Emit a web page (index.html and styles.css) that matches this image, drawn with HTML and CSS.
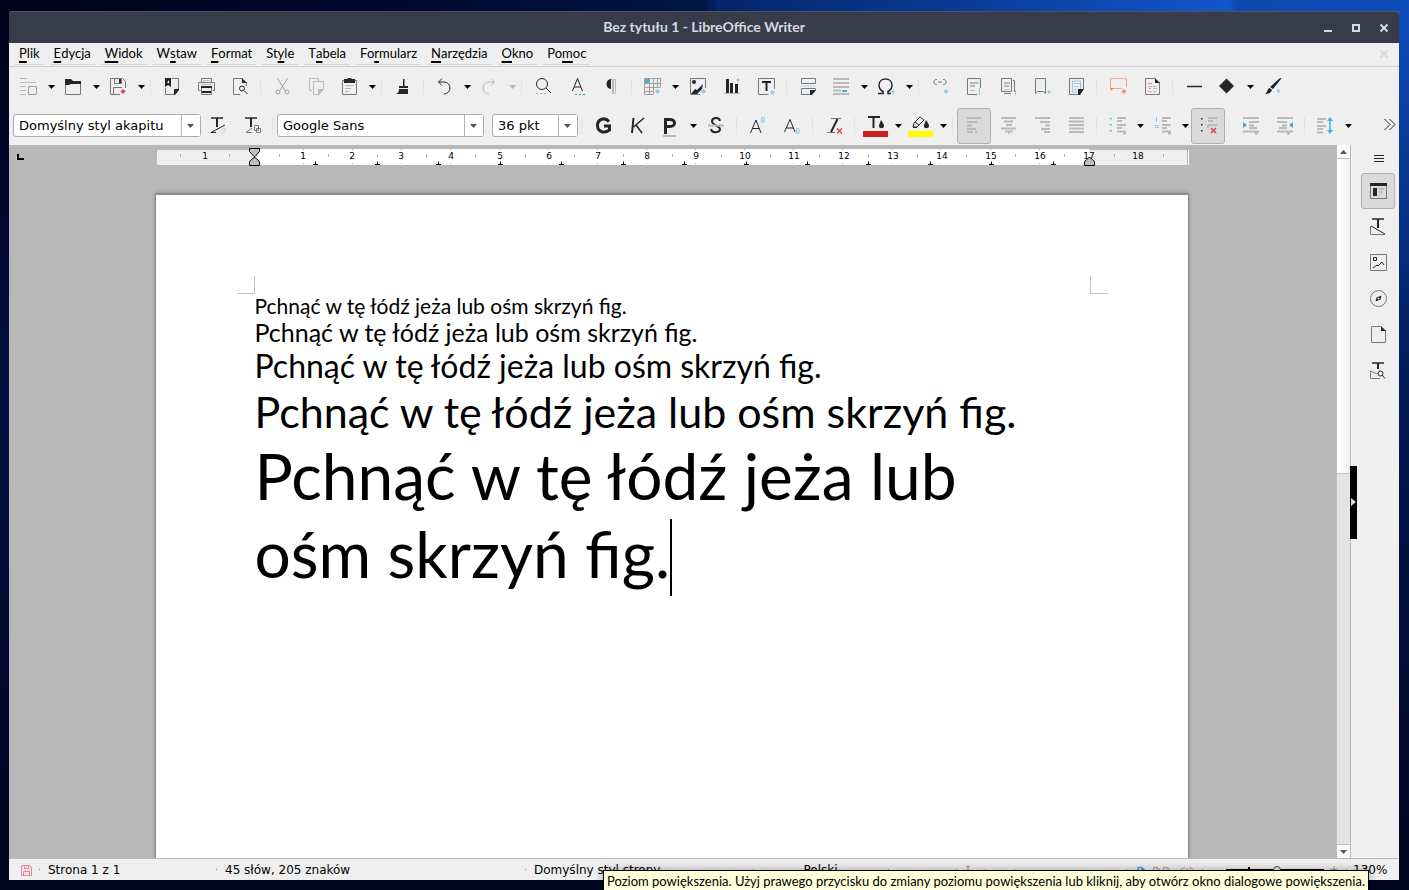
FILE: index.html
```html
<!DOCTYPE html>
<html lang="pl">
<head>
<meta charset="utf-8">
<title>Bez tytułu 1 - LibreOffice Writer</title>
<link rel="stylesheet" href="styles.css">
</head>
<body>
<svg class="defs" aria-hidden="true">
  <symbol id="dd" viewBox="0 0 7 4"><path d="M0 0h7L3.5 4z"/></symbol>
</svg>
<main class="window">
  <header class="titlebar">
    <h1>Bez tytułu 1 - LibreOffice Writer</h1>
    <div class="winbtns">
      <button aria-label="Minimalizuj"><svg viewBox="0 0 10 10"><path class="tb" d="M1 8h8"/></svg></button>
      <button aria-label="Maksymalizuj"><svg viewBox="0 0 10 10"><path class="tb" d="M2 2h6v6H2z"/></svg></button>
      <button aria-label="Zamknij"><svg viewBox="0 0 10 10"><path class="tb" d="M1.5 1.5l7 7m0-7l-7 7"/></svg></button>
    </div>
  </header>

  <nav class="menubar" aria-label="Menu">
    <button><u>P</u>lik</button>
    <button><u>E</u>dycja</button>
    <button><u>W</u>idok</button>
    <button>W<u>s</u>taw</button>
    <button><u>F</u>ormat</button>
    <button>St<u>y</u>le</button>
    <button>T<u>a</u>bela</button>
    <button>Fo<u>r</u>mularz</button>
    <button><u>N</u>arzędzia</button>
    <button><u>O</u>kno</button>
    <button>Po<u>m</u>oc</button>
    <button class="closedoc" aria-label="Zamknij dokument"><svg viewBox="0 0 10 10"><path d="M1.5 1.5l7 7m0-7l-7 7"/></svg></button>
  </nav>

  <div class="toolbar" role="toolbar" aria-label="Standardowy">
    <button class="split" aria-label="Szablony"><svg class="ic" viewBox="0 0 17 17"><path class="g" d="M0 .5h7M0 4.5h16M0 8.5h6M0 12.5h6M0 16.5h6"/><path class="gd" d="M8.5 8.5h8v8h-8z"/></svg><svg class="dd"><use href="#dd"/></svg></button>
    <button class="split" aria-label="Otwórz"><svg class="ic" viewBox="0 0 17 17"><path class="d" d="M.5 4v12.5h15V4"/><path class="f" d="M0 1h6l2 2h8v3H6L4 7H0z"/></svg><svg class="dd"><use href="#dd"/></svg></button>
    <button class="split" aria-label="Zapisz"><svg class="ic" viewBox="0 0 17 17"><path class="d" d="M10 16.5H.5V.5h12l3 3V10M4.5.5v5h7v-5M3.5 16V9.5H12"/><path class="f" d="M9 1h2v4H9z"/><path class="red" d="M13 11l2.5 2.500-2.500 2.500-2.500-2.500z"/></svg><svg class="dd"><use href="#dd"/></svg></button>
    <i class="sep"></i>
    <button aria-label="Eksportuj do PDF"><svg class="ic" viewBox="0 0 17 17"><path class="d" d="M8 .5h6.500V11M1.500 10v6.500H10"/><path class="f" d="M1 0h6v9l-3-2-3 2zM15 11v1l-4 5h-1v-6z"/><path class="w" d="M3 5l2-3v3z"/></svg></button>
    <button aria-label="Drukuj"><svg class="ic" viewBox="0 0 17 17"><path class="d" d="M3.500 4V.5h10V4M2.500 12.500H.5v-8h16v8h-2M3.500 10v6.500h10V10"/><path class="g" d="M3 6.500h11M5 2.500h7"/><path class="k2" d="M3 9h11M4 14h9"/></svg></button>
    <button aria-label="Podgląd wydruku"><svg class="ic" viewBox="0 0 17 17"><path class="d" d="M8 16.500H1.500V.5H11M14.500 4v4"/><path class="f" d="M10 0l5 5h-5z"/><circle class="k" cx="10" cy="10.500" r="2.500"/><path class="k" d="M12 12.500l3.500 3.500"/></svg></button>
    <i class="sep"></i>
    <button aria-label="Wytnij"><svg class="ic" viewBox="0 0 17 17"><path class="gd" d="M3.500.5L11 12.500M13.500.5L6 12.500"/><circle class="gd" cx="4" cy="14" r="2"/><circle class="gd" cx="13" cy="14" r="2"/></svg></button>
    <button aria-label="Kopiuj"><svg class="ic" viewBox="0 0 17 17"><path class="g" d="M4 12.500H1.500V.5h9V3M5.500 3.500h10v8l-5 5h-5z"/><path class="gf" d="M10 11h6l-5 6h-1z"/></svg></button>
    <button class="split" aria-label="Wklej"><svg class="ic" viewBox="0 0 17 17"><path class="d" d="M1.500 2.500h14v14h-14z"/><path class="f" d="M3 1h3l1-1h3l1 1h3v4H3z"/><path class="g" d="M4 7.500h9M4 10.500h6M4 13.500h4"/></svg><svg class="dd"><use href="#dd"/></svg></button>
    <i class="sep"></i>
    <button aria-label="Klonuj formatowanie"><svg class="ic" viewBox="0 0 17 17"><path class="f" d="M8 1h1.500v7H8zM4 8h9v2H4zM4 11h9v5H1c2-1 3-2 3-5z"/></svg></button>
    <i class="sep"></i>
    <button class="split" aria-label="Cofnij"><svg class="ic" viewBox="0 0 17 17"><path class="k" d="M6 .5L2.500 4 6 7.500M2.500 4H8a6 6 0 0 1 0 12"/></svg><svg class="dd"><use href="#dd"/></svg></button>
    <button class="split off" aria-label="Ponów"><svg class="ic" viewBox="0 0 17 17"><path class="g" d="M10 .5L13.500 4 10 7.500M13.500 4H8a6 6 0 0 0 0 12"/></svg><svg class="dd"><use href="#dd"/></svg></button>
    <i class="sep"></i>
    <button aria-label="Znajdź i zamień"><svg class="ic" viewBox="0 0 17 17"><circle class="k" cx="7" cy="6" r="5.500"/><path class="k" d="M11 10l5 5"/><path class="rs" d="M1 15.500h2m2 0h2m2 0h2"/></svg></button>
    <button aria-label="Pisownia"><svg class="ic" viewBox="0 0 17 17"><path class="k" d="M3.500 13L8.500.5l5 12.500M5 9h7"/><path class="gs" d="M6 16.500h2m2 0h2m2 0h2"/></svg></button>
    <button aria-label="Znaki formatowania"><svg class="ic" viewBox="0 0 17 17"><path class="f" d="M8 1v10C2 11 2 1 8 1z"/><path class="g2" d="M10 1v15"/><path class="g" d="M12.500 1v15M8 1.500h5"/></svg></button>
    <i class="sep"></i>
    <button class="split" aria-label="Wstaw tabelę"><svg class="ic" viewBox="0 0 17 17"><path class="gd" d="M.5.5h16v9M.5.5v16h9M5.500 1v15M9.500 1v15M13.500 1v9M1 5.500h15M1 9.500h15M1 13.500h9"/><path class="bf" d="M1 1h4v4H1z"/><path class="lb" d="M13.500 11l2.500 2.500-2.500 2.500-2.500-2.500z"/></svg><svg class="dd"><use href="#dd"/></svg></button>
    <button aria-label="Wstaw obraz"><svg class="ic" viewBox="0 0 17 17"><path class="d" d="M.5 16V.5h15V10M.5 16.500H10"/><circle class="f" cx="4" cy="4" r="2"/><path class="f" d="M1 16l4-5 2 1 6-6-1 5-5 5z"/><path class="lb" d="M13.500 11l2.500 2.500-2.500 2.500-2.500-2.500z"/></svg></button>
    <button aria-label="Wstaw wykres"><svg class="ic" viewBox="0 0 17 17"><path class="f" d="M2 1h3v14H2zM6 5h3v10H6zM11 6h3v9h-3z"/><path class="g" d="M0 15.500h16"/><path class="lb" d="M14 0l2 2-2 2-2-2z"/></svg></button>
    <button aria-label="Wstaw pole tekstowe"><svg class="ic" viewBox="0 0 17 17"><path class="d" d="M.5.5h16V11M.5.5v16h10"/><path class="k2" d="M4 4h9M8.500 4v9"/><path class="lb" d="M14.500 12l2.500 2.500-2.500 2.500-2.500-2.500z"/></svg></button>
    <i class="sep"></i>
    <button aria-label="Podział strony"><svg class="ic" viewBox="0 0 17 17"><path class="d" d="M1.500.5h14v5h-14zM15.500 12v-1.500h-14v6H10"/><path class="ls" d="M1 8h15" stroke-dasharray="2 1"/><path class="f" d="M10 12h6l-4 5h-2z"/></svg></button>
    <button class="split" aria-label="Wstaw pole"><svg class="ic" viewBox="0 0 17 17"><path class="g2" d="M0 1h16M0 5h16M0 9h16M0 12.500h8M0 16h16"/><path class="bf" d="M9 12h5v2H9z"/></svg><svg class="dd"><use href="#dd"/></svg></button>
    <button class="split" aria-label="Znak specjalny"><svg class="ic" viewBox="0 0 17 17"><path class="k2t" d="M0 15.500h5v-2C2 12 1 10 1 7c0-8 13-8 13 0 0 3-1 5-4 6.500v2h3"/><path class="lb" d="M15 12l2 2-2 2-2-2z"/></svg><svg class="dd"><use href="#dd"/></svg></button>
    <i class="sep"></i>
    <button aria-label="Wstaw hiperłącze"><svg class="ic" viewBox="0 0 17 17"><path class="d" d="M5 1.500H3.500l-2 2.500 2 2.500H5M11 1.500h1.500l2 2.500-2 2.500H11M6 4h4"/><path class="lb" d="M14 11l2.500 2.500L14 16l-2.500-2.500z"/></svg></button>
    <button aria-label="Przypis dolny"><svg class="ic" viewBox="0 0 17 17"><path class="d" d="M11 16.500H1.500V.5h13V10"/><path class="g2" d="M4 5h9M4 8h5"/><path class="ls" d="M4 12.500h5M13.500 10v7"/></svg></button>
    <button aria-label="Przypis końcowy"><svg class="ic" viewBox="0 0 17 17"><path class="d" d="M1.500.5h10v13h-10zM13 2.500h1.500V14M4 15.500h7"/><path class="g2" d="M4 5h6M4 8h5"/><path class="ls" d="M4 11.500h5M15.500 12v5"/></svg></button>
    <button aria-label="Zakładka"><svg class="ic" viewBox="0 0 17 17"><path class="d" d="M1.500.5h10v15l-2-2h-6l-2 2z"/><path class="lb" d="M15 12l2 2-2 2-2-2z"/></svg></button>
    <button aria-label="Odsyłacz"><svg class="ic" viewBox="0 0 17 17"><path class="d" d="M10 16.500H1.500V.5h14V11"/><path class="ls" d="M4.500 3h8v9m-8-9v11h5"/><path class="g" d="M6 5.500h6M6 8.500h5M6 11.500h3"/><path class="f" d="M10 11h6l-4 6h-2z"/></svg></button>
    <i class="sep"></i>
    <button aria-label="Komentarz"><svg class="ic" viewBox="0 0 17 17"><path class="os" d="M3 10.500h9M.5 11V.5h16V9"/><path class="of" d="M0 10h4l-3 3zM14 11l2.500 2.500L14 16l-2.500-2.500z"/></svg></button>
    <button aria-label="Śledź zmiany"><svg class="ic" viewBox="0 0 17 17"><path class="d" d="M11 .5H1.500v16h14V4"/><path class="f" d="M11 0l5 5h-5z"/><path class="g" d="M4 8.500h4M9 10.500h4M4 13.500h4M9 13.500h3"/><path class="rs" d="M4 5.500h4M5 10.500h2M9 8.500h3"/></svg></button>
    <i class="sep"></i>
    <button aria-label="Wstaw linię"><svg class="ic" viewBox="0 0 17 17"><path class="k2t" d="M1 8.500h15"/></svg></button>
    <button class="split" aria-label="Kształty"><svg class="ic" viewBox="0 0 17 17"><path class="f" d="M7.500.5l7.500 7.500-7.500 7.500L0 8z"/></svg><svg class="dd"><use href="#dd"/></svg></button>
    <button aria-label="Funkcje rysowania"><svg class="ic" viewBox="0 0 17 17"><path class="f" d="M15 0h1v1L8 11 5 9zM4.500 10l2.500 2c-1 3-4 4-7 4 3-2 2-5 4.500-6z"/><path class="lb" d="M13.500 11l2 2-2 2-2-2z"/></svg></button>
  </div>

  <div class="toolbar" role="toolbar" aria-label="Formatowanie">
    <span class="combo style"><select aria-label="Styl akapitu"><option>Domyślny styl akapitu</option></select><svg class="dd"><use href="#dd"/></svg></span>
    <button aria-label="Aktualizuj styl"><svg class="ic" viewBox="0 0 17 17"><path class="k2t" d="M1 1h12"/><path class="k2" d="M7 1v9"/><path class="k" d="M15 8L1 15.500h5"/><path class="ls" d="M11 14.500c1-3 3-3 5-2m-1 2l-3 2"/></svg></button>
    <button aria-label="Nowy styl"><svg class="ic" viewBox="0 0 17 17"><path class="k2t" d="M1 1h12"/><path class="k2" d="M7 1v9"/><path class="d" d="M8 11l-6 4.500h6M10.500 8.500h4v5h-4zM12.500 11.500h4v4h-4z"/></svg></button>
    <i class="sep"></i>
    <span class="combo font"><select aria-label="Nazwa czcionki"><option>Google Sans</option></select><svg class="dd"><use href="#dd"/></svg></span>
    <i class="sep hidden"></i>
    <span class="combo size"><select aria-label="Rozmiar czcionki"><option>36 pkt</option></select><svg class="dd"><use href="#dd"/></svg></span>
    <i class="sep"></i>
    <button aria-label="Pogrubienie"><svg class="ic" viewBox="0 0 17 17"><path class="k3" d="M14 4.500C10 0 2.500 1.500 2.500 8.500S10 16.500 14.500 13V9H9"/></svg></button>
    <button aria-label="Kursywa"><svg class="ic" viewBox="0 0 17 17"><path class="k2" d="M4.500 1L3 16"/><path class="k2t" d="M15 1L4.500 10M7 8l6 8"/></svg></button>
    <button class="split" aria-label="Podkreślenie"><svg class="ic" viewBox="0 0 17 20"><path class="k3" d="M3.500 18V3.500H8c6 0 6 7 0 7H4"/><path class="g2" d="M1 20h13"/></svg><svg class="dd"><use href="#dd"/></svg></button>
    <button aria-label="Przekreślenie"><svg class="ic" viewBox="0 0 17 17"><path class="k2" d="M12 4C11-.5 4 .5 4 4.500S12 8.500 12 12s-8 5-9 0"/><path class="g2" d="M0 8.500h16"/></svg></button>
    <i class="sep"></i>
    <button aria-label="Indeks górny"><svg class="ic" viewBox="0 0 17 17"><path class="k" d="M.5 16L6 3l5 13M2.500 11.500h7"/><path class="ls" d="M11.500.5h2l1 2-1 3h-2zM11.500 3h2"/></svg></button>
    <button aria-label="Indeks dolny"><svg class="ic" viewBox="0 0 17 17"><path class="k" d="M.5 15L6 2.500 11 15M2.500 11h7"/><path class="ls" d="M12.500 11.500h2l1 2-1 3h-2zM12.500 14h2"/></svg></button>
    <i class="sep"></i>
    <button aria-label="Wyczyść formatowanie"><svg class="ic" viewBox="0 0 17 17"><path class="d" d="M5 1.500h10M1 15.500h8"/><path class="k2" d="M11.500 2L5 15"/><path class="rd" d="M11 11.500l5 5m0-5l-5 5"/></svg></button>
    <i class="sep"></i>
    <button class="split" aria-label="Kolor czcionki"><svg class="ic wide" viewBox="0 0 25 20"><path class="k2" d="M5 1h12M10.500 1v11"/><path class="f" d="M18 4c2 3 3 4 3 6 0 3-5 3-5 0 0-2 1-3 2-6z"/><path fill="#c9211e" d="M0 15h25v6H0z"/></svg><svg class="dd"><use href="#dd"/></svg></button>
    <button class="split" aria-label="Wyróżnienie"><svg class="ic wide" viewBox="0 0 25 20"><path class="k" d="M5 11l1-4 6-6 4 3-7 7zM7 6l4 3M5 11.500h4"/><path class="f" d="M18 4c2 3 3 4 3 6 0 3-5 3-5 0 0-2 1-3 2-6z"/><path fill="#ff0" d="M0 15h25v6H0z"/></svg><svg class="dd"><use href="#dd"/></svg></button>
    <i class="sep"></i>
    <button class="on" aria-label="Do lewej" aria-pressed="true"><svg class="ic" viewBox="0 0 17 17"><path class="g2" d="M1 1h15M1 5h10M1 8.500h5M1 12h9M1 15h6M9 15h2"/></svg></button>
    <button aria-label="Do środka"><svg class="ic" viewBox="0 0 17 17"><path class="g2" d="M1 1h15M4 4.500h9M6 8h6M1 11.500h15M5 14.500h8M8 16h2"/></svg></button>
    <button aria-label="Do prawej"><svg class="ic" viewBox="0 0 17 17"><path class="g2" d="M1 1h15M6 5h10M11 8.500h5M7 12h9M10 15h6"/></svg></button>
    <button aria-label="Wyjustuj"><svg class="ic" viewBox="0 0 17 17"><path class="g2" d="M1 1h15M1 4.500h15M1 8h15M1 11.500h15M1 15h15"/></svg></button>
    <i class="sep"></i>
    <button class="split" aria-label="Punktory"><svg class="ic" viewBox="0 0 17 17"><path class="g2" d="M8 1h9M8 4h5M8 8h9M8 11h5M8 14.500h9M14 16.500h3"/><path class="bf" d="M1 1h1.500v1.500H1zM1 7h1.500v1.500H1zM1 13h1.500v1.500H1z"/></svg><svg class="dd"><use href="#dd"/></svg></button>
    <button class="split" aria-label="Numeracja"><svg class="ic" viewBox="0 0 17 17"><path class="g2" d="M8 1h9M8 4h5M8 8h9M8 11h5M8 14.500h9M14 16.500h3"/><path class="ls" d="M2.500 0v5M1 8.500h4M1 10.500h4"/></svg><svg class="dd"><use href="#dd"/></svg></button>
    <button class="on" aria-label="Bez listy" aria-pressed="true"><svg class="ic" viewBox="0 0 17 17"><path class="g2" d="M8 1h9M8 4h5M8 8h9M8 8v3"/><path class="f" d="M1 1h1.500v1.500H1zM1 7h1.500v1.500H1zM1 13h1.500v1.500H1z"/><path class="rd" d="M11 11l5 5m0-5l-5 5"/></svg></button>
    <i class="sep"></i>
    <button aria-label="Zwiększ wcięcie"><svg class="ic" viewBox="0 0 17 17"><path class="g2" d="M1 1h16M7 5h10M7 8.500h5M7 11h8M1 14.500h16M13 16.500h3"/><path class="bf" d="M1 5l4 3-4 3z"/></svg></button>
    <button aria-label="Zmniejsz wcięcie"><svg class="ic" viewBox="0 0 17 17"><path class="g2" d="M1 1h16M1 5h10M6 8.500h5M3 11h8M1 14.500h16M11 16.500h3"/><path class="bf" d="M17 5l-4 3 4 3z"/></svg></button>
    <i class="sep"></i>
    <button class="split" aria-label="Odstępy"><svg class="ic" viewBox="0 0 17 17"><path class="g2" d="M0 2h9M0 5h6M0 9h9M0 12h6M0 15.500h6"/><path class="bs" d="M13 2v13"/><path class="bf" d="M13 0l3 4h-6zM13 17l3-4h-6z"/></svg><svg class="dd"><use href="#dd"/></svg></button>
    <button class="more" aria-label="Więcej"><svg class="ic" viewBox="0 0 17 17"><path class="k" d="M6.500 2L12 7.500 6.500 13M11.500 2L17 7.500 11.500 13"/></svg></button>
  </div>

  <div class="work">
    <section class="canvas" aria-label="Dokument">
      <svg class="tabsel" viewBox="0 0 8 7"><path d="M1 0v5H7" /></svg>
      <svg class="ruler" viewBox="0 0 1034 18">
        <path fill="#efefef" d="M2 1h1032v15H2z"/>
        <path fill="#fff" d="M99 0h835v16H99zM1033 1h1v15h-1z"/>
        <path fill="#b4b4b4" d="M1032 1h1v15h-1z"/>
        <path class="rt" d="M25.500 5v3M74.500 5v3M124.500 5v3M173.500 5v3M222.500 5v3M271.500 5v3M320.500 5v3M370.500 5v3M419.500 5v3M468.500 5v3M517.500 5v3M566.500 5v3M615.500 5v3M664.500 5v3M713.500 5v3M762.500 5v3M811.500 5v3M860.500 5v3M909.500 5v3M959.500 5v3M1008.500 5v3M148.500 0v1m0 13v1M197.500 0v1m0 13v1M246.500 0v1m0 13v1M295.500 0v1m0 13v1M344.500 0v1m0 13v1M393.500 0v1m0 13v1M442.500 0v1m0 13v1M491.500 0v1m0 13v1M540.500 0v1m0 13v1M589.500 0v1m0 13v1M638.500 0v1m0 13v1M687.500 0v1m0 13v1M736.500 0v1m0 13v1M785.500 0v1m0 13v1M835.500 0v1m0 13v1M884.500 0v1m0 13v1"/>
        <path class="tabs" d="M158 15.500h5m-2.500-3v3M220 15.500h5m-2.500-3v3M281 15.500h5m-2.500-3v3M343 15.500h5m-2.500-3v3M404 15.500h5m-2.500-3v3M466 15.500h5m-2.500-3v3M527 15.500h5m-2.500-3v3M589 15.500h5m-2.500-3v3M650 15.500h5m-2.500-3v3M711 15.500h5m-2.500-3v3M773 15.500h5m-2.500-3v3M834 15.500h5m-2.500-3v3M896 15.500h5m-2.500-3v3"/>
        <g class="nums"><text x="50" y="10">1</text><text x="148" y="10">1</text><text x="197" y="10">2</text><text x="246" y="10">3</text><text x="296" y="10">4</text><text x="345" y="10">5</text><text x="394" y="10">6</text><text x="443" y="10">7</text><text x="492" y="10">8</text><text x="541" y="10">9</text><text x="590" y="10">10</text><text x="639" y="10">11</text><text x="689" y="10">12</text><text x="738" y="10">13</text><text x="787" y="10">14</text><text x="836" y="10">15</text><text x="885" y="10">16</text><text x="934" y="10">17</text><text x="983" y="10">18</text></g>
        <path class="mark" d="M94.500-.5h10v3l-4.500 5h-1l-4.500-5zM94.500 16.500h10v-4l-4.500-4h-1l-4.500 4zM929.500 16.500h10v-4l-4.500-4h-1l-4.500 4z"/>
      </svg>
      <article class="page">
        <div class="corners"><i class="tl"></i><i class="tr"></i></div>
        <p class="s12">Pchnąć w tę łódź jeża lub ośm skrzyń fig.</p>
        <p class="s14">Pchnąć w tę łódź jeża lub ośm skrzyń fig.</p>
        <p class="s18">Pchnąć w tę łódź jeża lub ośm skrzyń fig.</p>
        <p class="s24">Pchnąć w tę łódź jeża lub ośm skrzyń fig.</p>
        <p class="s36">Pchnąć w tę łódź jeża lub<br>ośm skrzyń fig.<i class="caret"></i></p>
      </article>
    </section>
    <div class="scroll">
      <button aria-label="W górę"><svg viewBox="0 0 7 4"><path d="M0 4h7L3.500 0z"/></svg></button>
      <div class="track"><div class="thumb"></div></div>
      <button aria-label="W dół"><svg viewBox="0 0 7 4"><path d="M0 0h7L3.500 4z"/></svg></button>
    </div>
    <aside class="sidebar" aria-label="Panel boczny">
      <button class="handle" aria-label="Ukryj panel"><svg viewBox="0 0 5 8"><path d="M0 0l5 4-5 4z"/></svg></button>
      <button class="short" aria-label="Ustawienia"><svg class="ic" viewBox="0 0 17 17"><path class="k" d="M4 5.500h10M4 8.500h10M4 11.500h10"/></svg></button>
      <button class="on" aria-label="Właściwości"><svg class="ic" viewBox="0 0 17 17"><path class="d" d="M.5 2v14.500h16V2"/><path class="f" d="M0 1h17v3H0zM3 6h4v8H3z"/><path class="g2" d="M9 7h5M9 10h3M9 13h1"/></svg></button>
      <button aria-label="Style"><svg class="ic" viewBox="0 0 17 17"><path class="k2t" d="M2 1h12"/><path class="k2" d="M8 1v9"/><path class="k" d="M1 8l14 8"/><path class="d" d="M.5 8v8.500H15"/></svg></button>
      <button aria-label="Galeria"><svg class="ic" viewBox="0 0 17 17"><path class="d" d="M.5.5h16v16H.5z"/><path class="k" d="M3.500 3.500h3v3h-3zM3 14l4-3 1 1 4-4 2 3"/></svg></button>
      <button aria-label="Nawigator"><svg class="ic" viewBox="0 0 17 17"><circle class="d" cx="8.500" cy="8.500" r="8"/><path class="f" d="M11.500 5.500l-1 4-5 2 1-4z"/><circle cx="8.500" cy="8.500" r="1" fill="#efefef"/></svg></button>
      <button aria-label="Strona"><svg class="ic" viewBox="0 0 17 17"><path class="d" d="M11 .5H1.500v16h14V4"/><path class="f" d="M11 0l5 5h-5z"/></svg></button>
      <button aria-label="Inspektor stylów"><svg class="ic" viewBox="0 0 17 17"><path class="k2t" d="M2 1h12"/><path class="k2" d="M8 1v6"/><path class="d" d="M.5 9v7.500H10M.5 9L7 12"/><circle class="k" cx="10.500" cy="11.500" r="2.500"/><path class="k" d="M12 13l3 3.500"/></svg></button>
    </aside>
  </div>

  <footer class="status">
    <span class="c-save"><svg viewBox="0 0 11 11"><path d="M.5.5h8l2 2v8H.5zM3.500.5v3h4v-3M2.500 10V6.500h6V10"/></svg></span>
    <span class="c-page">Strona 1 z 1</span>
    <span class="c-words">45 słów, 205 znaków</span>
    <span class="c-style">Domyślny styl strony</span>
    <span class="c-lang">Polski</span>
    <span class="c-ins"></span>
    <span class="c-sel"><svg viewBox="0 0 6 10"><path class="gd" d="M1 .5h4M3 0v9"/></svg></span>
    <span class="c-sign"></span>
    <span class="c-info"></span>
    <span class="c-view"><svg viewBox="0 0 60 12"><path class="bs" d="M1 12V2.500h4l3 3V12M5 2v4h4"/><path class="gd" d="M16.500 12V2.500h4l3 3V12M20 2v4h4M26.500 12V2.500h4l3 3V12M30 2v4h4M42 12c0-9 4-9 6-9M50 12V3M57 12c0-9-2-9-5-9"/></svg></span>
    <span class="c-zoom"><i>−</i><input type="range" min="0" max="100" value="52" aria-label="Powiększenie"><i>+</i></span>
    <span class="c-pct">130%</span>
  </footer>
</main>
<div class="tooltip" role="tooltip">Poziom powiększenia. Użyj prawego przycisku do zmiany poziomu powiększenia lub kliknij, aby otwórz okno dialogowe powiększenia.</div>
</body>
</html>
```
FILE: styles.css
```css
* { box-sizing: border-box; }
html { height: 100%; }
body {
  position: relative;
  height: 100vh;
  margin: 0;
  padding: 11px 10px 10px 9px;
  overflow: hidden;
  font: 13px/18px "Lato", sans-serif;
  color: #000;
  background:
    linear-gradient(180deg, transparent 0, transparent 30px, rgba(0, 18, 70, .9) 45%, #00051e 100%),
    linear-gradient(90deg, #00021a 0, #00082e 28%, #001745 50%, #04256a 51%, #0a3a95 68%, #1157cc 87%, #0d49ae 88%, #0d4bb8 100%);
}
.defs { position: absolute; width: 0; height: 0; }
button {
  display: flex;
  align-items: center;
  justify-content: center;
  flex: none;
  padding: 0;
  border: 0;
  background: none;
  font: inherit;
  color: inherit;
}
i { font-style: normal; }
svg { display: block; flex: none; overflow: visible; }

.window {
  display: flex;
  flex-direction: column;
  height: 100%;
  overflow: hidden;
  border-radius: 4px 4px 0 0;
  background: #efefef;
}

.titlebar {
  position: relative;
  display: flex;
  align-items: center;
  justify-content: center;
  flex: none;
  height: 32px;
  border-top: 1px solid #4d525e;
  background: #383c4a;
  color: #d3dae3;
}
.titlebar h1 { margin: 0; padding-bottom: 2px; font-size: 14px; line-height: 18px; }
.winbtns { position: absolute; right: 10px; display: flex; gap: 18px; }
.winbtns svg { width: 10px; height: 10px; }
.tb { fill: none; stroke: #d3dae3; stroke-width: 2; }

.menubar {
  display: flex;
  gap: 6px;
  flex: none;
  height: 24px;
  padding: 0 6px;
  border-bottom: 1px solid #d2d2d2;
}
.menubar button { height: 22px; padding: 0 4px 1px; border-bottom: 1px solid #d8d8d8; }
.menubar u {
  text-decoration-thickness: 2px;
  text-underline-offset: 3px;
  text-decoration-skip-ink: none;
}
.menubar .closedoc { margin-left: auto; border: 0; }
.closedoc svg { width: 10px; height: 10px; fill: none; stroke: #dcdcdc; stroke-width: 2; }

.toolbar {
  display: flex;
  align-items: center;
  flex: none;
  height: 39px;
  padding: 0 3px;
}
.toolbar button { width: 34px; height: 36px; padding-left: 1px; border-radius: 3px; }
.toolbar .split { width: 45px; justify-content: flex-start; gap: 11px; padding-left: 8px; }
.toolbar .more { width: 20px; margin-left: auto; }
.ic { width: 17px; height: 17px; }
.ic[viewBox="0 0 17 20"] { height: 20px; }
.ic.wide { width: 25px; height: 20px; margin: 0 -4px; }
.dd { width: 7px; height: 4px; fill: #000; }
.off .dd { fill: #b8b8b8; }
.toolbar .on, .sidebar .on { border: 1px solid #b0b0b0; border-radius: 3px; background: #dadada; }
.sep { flex: none; width: 1px; height: 17px; margin: 0 4px 0 3px; background: #e2e2e2; }
.sep.hidden { visibility: hidden; }

.k, .k2, .k2t, .k3, .d, .g, .g2, .gd, .ls, .bs, .rs, .gs, .os, .rd { fill: none; }
.k { stroke: #232629; }
.k2t { stroke: #232629; stroke-width: 1.500; }
.k2 { stroke: #232629; stroke-width: 2; }
.k3 { stroke: #232629; stroke-width: 3; }
.d { stroke: #77797b; }
.g { stroke: #bababa; }
.g2 { stroke: #bababa; stroke-width: 2; }
.gd { stroke: #a0a0a0; }
.ls { stroke: #8fcdf0; }
.bs { stroke: #3daee9; stroke-width: 1.500; }
.rs { stroke: #ee8a80; }
.gs { stroke: #27ae60; }
.os { stroke: #f5a58c; }
.rd { stroke: #da4453; stroke-width: 1.500; }
.f { fill: #232629; }
.w { fill: #fff; }
.gf { fill: #bababa; }
.red { fill: #da4453; }
.bf { fill: #3daee9; }
.lb { fill: #8fcdf0; }
.of { fill: #f28a6a; }

.combo {
  position: relative;
  display: flex;
  flex: none;
  height: 23px;
  border: 1px solid #acacac;
  border-radius: 3px;
  background: #fff;
}
.combo select {
  width: 100%;
  padding: 0 20px 0 5px;
  border: 0;
  appearance: none;
  background: linear-gradient(90deg, #b4b4b4 1px, #fff 1px) right / 19px 100% no-repeat;
  font: 13px/18px "DejaVu Sans", sans-serif;
  color: #000;
}
.combo .dd { position: absolute; right: 6px; top: 9px; fill: #555; }
.combo.style { width: 188px; margin: 0 0 0 1px; }
.combo.font { width: 207px; }
.combo.size { width: 86px; }

.work { display: flex; flex: 1; min-height: 0; }
.canvas {
  position: relative;
  display: flex;
  flex-direction: column;
  align-items: center;
  flex: 1;
  min-width: 0;
  padding-right: 2px;
  overflow: hidden;
  background: #b8b8b8;
}
.tabsel { position: absolute; left: 8px; top: 9px; width: 8px; height: 7px; fill: none; stroke: #000; stroke-width: 2; }
.ruler { width: 1034px; height: 18px; margin-top: 4px; }
.rt { fill: none; stroke: #b4b4b4; }
.tabs { fill: none; stroke: #000; }
.nums { font: 9px "DejaVu Sans", sans-serif; text-anchor: middle; }
.mark { fill: #c0c0c0; stroke: #000; }

.page {
  position: relative;
  flex: 1;
  width: 1034px;
  margin-top: 26px;
  padding: 98px 99px 0;
  border: solid #8c8c8c;
  border-width: 2px 1px 0;
  background: #fff;
  box-shadow: 0 0 4px rgba(0, 0, 0, .25);
}
.corners {
  position: absolute;
  left: 81px;
  right: 80px;
  top: 81px;
  display: flex;
  justify-content: space-between;
}
.corners i { width: 18px; height: 18px; border: solid #c4c4c4; border-width: 0 1px 1px 0; }
.corners .tr { border-width: 0 0 1px 1px; }
.page p { margin: 0; white-space: nowrap; }
.s12 { font-size: 21px; line-height: 25px; }
.s14 { font-size: 25px; line-height: 28px; }
.s18 { font-size: 32px; line-height: 40px; }
.s24 { font-size: 43px; line-height: 51px; }
.s36 { font-size: 64px; line-height: 78px; }
.caret { display: inline-block; width: 2px; height: 77px; margin: -20px 0 -18px; background: #000; }

.scroll { display: flex; flex-direction: column; flex: none; width: 15px; border: solid #bdbdbd; border-width: 0 1px; background: #e4e4e4; }
.scroll button { height: 13px; background: #fafafa; }
.scroll svg { width: 7px; height: 4px; fill: #555; }
.track { flex: 1; border: solid #c0c0c0; border-width: 1px 0; }
.thumb { height: 46%; border-bottom: 1px solid #bdbdbd; background: linear-gradient(90deg, #fff, #f2f2f2); }

.sidebar {
  position: relative;
  display: flex;
  flex-direction: column;
  align-items: flex-end;
  flex: none;
  width: 48px;
  padding-right: 4px;
}
.sidebar button { width: 34px; height: 36px; padding-bottom: 1px; }
.sidebar .short { height: 28px; }
.sidebar .handle { position: absolute; left: -1px; top: 45%; width: 7px; height: 73px; background: #000; }
.handle svg { width: 5px; height: 8px; fill: #ddd; }

.status {
  display: flex;
  flex: none;
  height: 22px;
  border-top: 1px solid #b8b8b8;
  font: 12px/22px "DejaVu Sans", sans-serif;
}
.status > span { position: relative; display: flex; flex: none; white-space: nowrap; padding-left: 9px; }
.status > span + span::before {
  content: "";
  position: absolute;
  left: 0;
  top: 10px;
  width: 1px;
  height: 1px;
  background: #888;
}
.status .c-save { width: 30px; padding: 6px 0 0 12px; }
.c-save svg { width: 11px; height: 11px; fill: #fbe3e5; stroke: #e08a95; }
.status .c-page { width: 177px; }
.status .c-words { width: 309px; }
.status .c-style { flex: 1; }
.status .c-lang { width: 135px; justify-content: center; padding: 0; }
.status .c-ins { width: 68px; }
.status .c-sel { width: 29px; padding-top: 7px; }
.c-sel svg { width: 6px; height: 10px; }
.status .c-sign { width: 29px; }
.status .c-info { width: 112px; }
.status .c-view { width: 76px; padding: 6px 0 0 11px; }
.c-view svg { width: 60px; height: 12px; }
.status .c-zoom { width: 144px; align-items: center; gap: 5px; color: #999; }
.c-zoom input {
  width: 98px;
  height: 11px;
  margin: 0;
  appearance: none;
  background:
    linear-gradient(#000, #000) 22px 3px / 2px 5px no-repeat,
    linear-gradient(#000, #000) 0 5px / 100% 1px no-repeat;
}
.c-zoom input::-webkit-slider-thumb {
  appearance: none;
  width: 8px;
  height: 8px;
  border: 1px solid #444;
  border-radius: 50%;
  background: #e8e8e8;
}
.status .c-pct { width: 53px; padding-left: 7px; }

.tooltip {
  position: absolute;
  right: 40px;
  bottom: -3px;
  padding: 1px 3px;
  border: 1px solid #000;
  background: #ffffdc;
  box-shadow: 0 0 8px rgba(0, 0, 0, .35);
  font-size: 13px;
  line-height: 19px;
  white-space: nowrap;
}
```
